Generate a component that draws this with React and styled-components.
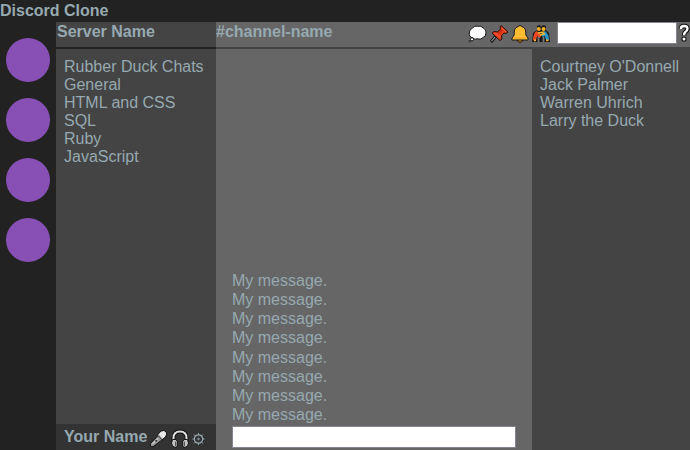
import React from "react";
import styled, { createGlobalStyle } from "styled-components";

const Global = createGlobalStyle`
  * { box-sizing: border-box; }
  body {
    margin: 0;
    overflow: hidden;
    background: #222;
    color: #97a9b0;
    font: 16px/18px "Liberation Sans", Arial, sans-serif;
  }
`;

const App = styled.div`
  display: grid;
  grid-template-rows: 22px 428px;
  width: 690px;
  height: 450px;
`;
const Title = styled.h1`
  margin: 0;
  padding-top: 2px;
  font-size: 16px;
  line-height: 18px;
`;
const Layout = styled.div`
  display: grid;
  grid-template-columns: 56px 160px 474px;
`;
const Servers = styled.nav`
  display: flex;
  flex-direction: column;
  align-items: center;
  gap: 16px;
  padding-top: 16px;
`;
const Server = styled.div`
  width: 44px;
  height: 44px;
  border-radius: 50%;
  background: #8850b4;
`;
const Sidebar = styled.aside`
  display: grid;
  grid-template-rows: 27px 1fr 26px;
  background: #444;
`;
const Heading = styled.h2`
  margin: 0;
  font-size: 16px;
  line-height: 18px;
`;
const ServerHeader = styled.header`
  padding: 1px 0 0 1px;
  border-bottom: 2px solid #222;
`;
const List = styled.ul`
  margin: 0;
  padding: 9px 8px;
  list-style: none;
  white-space: nowrap;
`;
const Profile = styled.footer`
  display: flex;
  padding: 4px 0 0 8px;
  background: #333;
`;
const ProfileIcons = styled.div`
  display: flex;
  padding: 2px 0 0 2px;
  gap: 3px;
`;
const Main = styled.main`
  display: grid;
  grid-template-rows: 27px 1fr;
  min-width: 0;
`;
const ChannelHeader = styled.header`
  display: flex;
  justify-content: space-between;
  border-bottom: 2px solid #444;
  background: #666;
`;
const ChannelName = styled(Heading)`
  padding-top: 1px;
`;
const Tools = styled.div`
  display: flex;
  align-items: flex-start;
`;
const ToolIcons = styled.div`
  display: flex;
  gap: 3px;
  padding: 3px 7px 0 0;
`;
const Input = styled.input`
  display: block;
  flex: none;
  width: ${(p) => p.$width}px;
  height: 22px;
  padding: 1px 2px;
  border: 1px solid #858591;
  border-radius: 1px;
  background: #fff;
  outline: none;
`;
const Content = styled.div`
  display: grid;
  grid-template-columns: 316px 158px;
`;
const Chat = styled.section`
  display: flex;
  flex-direction: column;
  justify-content: flex-end;
  padding: 0 16px 2px;
  background: #666;
`;
const Messages = styled.div`
  padding-bottom: 1.6px;
`;
const Message = styled.p`
  margin: 0;
  line-height: 19.2px;
`;
const Members = styled.aside`
  background: #444;
`;
const Icon = styled.svg`
  display: block;
  flex: none;
  overflow: visible;
`;

const Bubble = () => (
  <Icon width="19" height="18" viewBox="0 0 18 18">
    <path d="M4 3Q6 .5 9 1.3Q13 .3 14.7 3Q18 4.3 17.5 8Q17.5 12 14 12.8Q12 15 9 13.8Q6 15 4.5 13Q.2 12 .8 8Q.5 5 4 3Z" fill="#fff" stroke="#161616" />
    <circle cx="3.5" cy="14.3" r="1.6" fill="#fff" stroke="#161616" />
    <circle cx="1.3" cy="16.2" r=".8" fill="#fff" stroke="#161616" />
  </Icon>
);
const Pin = () => (
  <Icon width="18" height="18" viewBox="0 0 18 18">
    <path d="M6 11L1 17" stroke="#161616" strokeWidth="3" />
    <path d="M6 11L1.5 16.2" stroke="#b8c8ce" />
    <path d="M11 .5L18 7L16 8.5L14 8L11.5 10.7L12 14L10 15.5L2 8.2L4 6.5L7.5 7L10.5 4L10 2Z" fill="#e43a18" stroke="#27100d" />
    <path d="M11.5 2.7L15.8 6.8M5 7.8L10 12.6" stroke="#ff6840" />
    <path d="M11.5 5L8.5 8" stroke="#b52713" strokeWidth="1.4" />
  </Icon>
);
const Bell = () => (
  <Icon width="18" height="18" viewBox="0 0 18 18">
    <path d="M6.5 14H11.5V16Q9 19 6.5 16Z" fill="#d78b13" stroke="#161616" />
    <path d="M7.3 1.5Q9 -.7 10.7 1.5Q14.8 3 14.8 7V10L17 13V15H1V13L3.2 10V7Q3.2 3 7.3 1.5Z" fill="#fdbd32" stroke="#161616" />
    <path d="M2.5 13.3H15.5" stroke="#eca529" />
  </Icon>
);
const People = () => (
  <Icon width="18" height="18" viewBox="0 0 18 18">
    <path d="M5 5L5 1L8 0L9 2L11 0L14 1L14 5L17 8L18 17H0L1 8Z" fill="#191919" />
    <path d="M4.5 6Q1.3 8 1 15H4L5 11L7.5 13L10 10Z" fill="#ed4a23" />
    <path d="M13 6L9 9L10.5 12L13 11L14 15H17Q17 9 13 6Z" fill="#2b98c5" />
    <circle cx="6.8" cy="4" r="2" fill="#f1ae25" />
    <circle cx="11.6" cy="4" r="2" fill="#f5b42a" />
    <path d="M6 8L12 7M8 10L13 8.5" stroke="#f4b52c" strokeWidth="1.5" />
    <path d="M6.5 12V17M11.5 12V17" stroke="#76777a" strokeWidth="1.8" />
    <path d="M1.8 15.3H4M14 15.3H16.5" stroke="#f4b52c" strokeWidth="1.7" />
  </Icon>
);
const Question = () => (
  <Icon width="13" height="20" viewBox="0 0 13 20">
    <path d="M3.8 7Q3.8 4 7.2 4Q10.8 4 10.4 7Q10.2 9 8.4 10Q7 11 7 13.5" fill="none" stroke="#111" strokeWidth="4.6" />
    <circle cx="7" cy="17" r="2.6" fill="#111" />
    <path d="M3.8 7Q3.8 4 7.2 4Q10.8 4 10.4 7Q10.2 9 8.4 10Q7 11 7 13.2" fill="none" stroke="#fff" strokeWidth="2.4" />
    <circle cx="7" cy="17" r="1.5" fill="#fff" />
  </Icon>
);
const Microphone = () => (
  <Icon width="19" height="18" viewBox="0 0 18 18">
    <path d="M8.5 5.5L1 13.5Q0 17 3.5 16.8L13 9.5Z" fill="#969696" stroke="#111" />
    <path d="M8 5L11.5 1Q15 -.5 16.7 2Q18 4.5 16 6.8L12.5 10Z" fill="#e8e8e8" stroke="#111" />
    <path d="M8.9 5.5L12.6 9.2" stroke="#777" strokeWidth="1.5" />
    <path d="M3 14L8.5 8.5" stroke="#c8c8c8" strokeWidth="1.5" />
    <path d="M6 11.5L7.2 10.3" stroke="#222" strokeWidth="1.6" />
  </Icon>
);
const Headphones = () => (
  <Icon width="18" height="18" viewBox="0 0 18 18">
    <path d="M2.5 12V8Q2.5 1.5 9 1.5T15.5 8V12" fill="none" stroke="#111" strokeWidth="4" />
    <path d="M2.5 12V8Q2.5 1.5 9 1.5T15.5 8V12" fill="none" stroke="#ddd" strokeWidth="2" />
    <path d="M1.5 9.5H4.5L6.3 11V16.5L4 17.5Q.5 16 .5 13ZM16.5 9.5H13.5L11.7 11V16.5L14 17.5Q17.5 16 17.5 13Z" fill="#c5c5c5" stroke="#111" />
    <path d="M4.6 11.5V16M13.4 11.5V16" stroke="#555" strokeWidth="1.2" />
  </Icon>
);
const Gear = () => (
  <Icon width="14" height="16" viewBox="0 0 14 16">
    <g fill="none" stroke="#97a9b0">
      <circle cx="6.5" cy="9" r="4.2" strokeWidth="1.2" />
      <circle cx="6.5" cy="9" r=".8" />
      <path d="M6.5 3V5M6.5 13V15M.5 9H2.5M10.5 9H12.5M2.1 4.6L3.6 6.1M9.4 11.9L10.9 13.4M2.1 13.4L3.6 11.9M9.4 6.1L10.9 4.6" />
    </g>
  </Icon>
);

const channels = ["Rubber Duck Chats", "General", "HTML and CSS", "SQL", "Ruby", "JavaScript"];
const members = ["Courtney O'Donnell", "Jack Palmer", "Warren Uhrich", "Larry the Duck"];

export default function DiscordClone() {
  return (
    <App>
      <Global />
      <Title>Discord Clone</Title>
      <Layout>
        <Servers>{[0, 1, 2, 3].map((id) => <Server key={id} />)}</Servers>
        <Sidebar>
          <ServerHeader><Heading>Server Name</Heading></ServerHeader>
          <List>{channels.map((name) => <li key={name}>{name}</li>)}</List>
          <Profile>
            <Heading>Your Name</Heading>
            <ProfileIcons><Microphone /><Headphones /><Gear /></ProfileIcons>
          </Profile>
        </Sidebar>
        <Main>
          <ChannelHeader>
            <ChannelName>#channel-name</ChannelName>
            <Tools>
              <ToolIcons><Bubble /><Pin /><Bell /><People /></ToolIcons>
              <Input $width={120} aria-label="Search" />
              <Question />
            </Tools>
          </ChannelHeader>
          <Content>
            <Chat>
              <Messages>
                {Array.from({ length: 8 }, (_, i) => <Message key={i}>My message.</Message>)}
              </Messages>
              <Input $width={284} aria-label="Message" />
            </Chat>
            <Members><List>{members.map((name) => <li key={name}>{name}</li>)}</List></Members>
          </Content>
        </Main>
      </Layout>
    </App>
  );
}
